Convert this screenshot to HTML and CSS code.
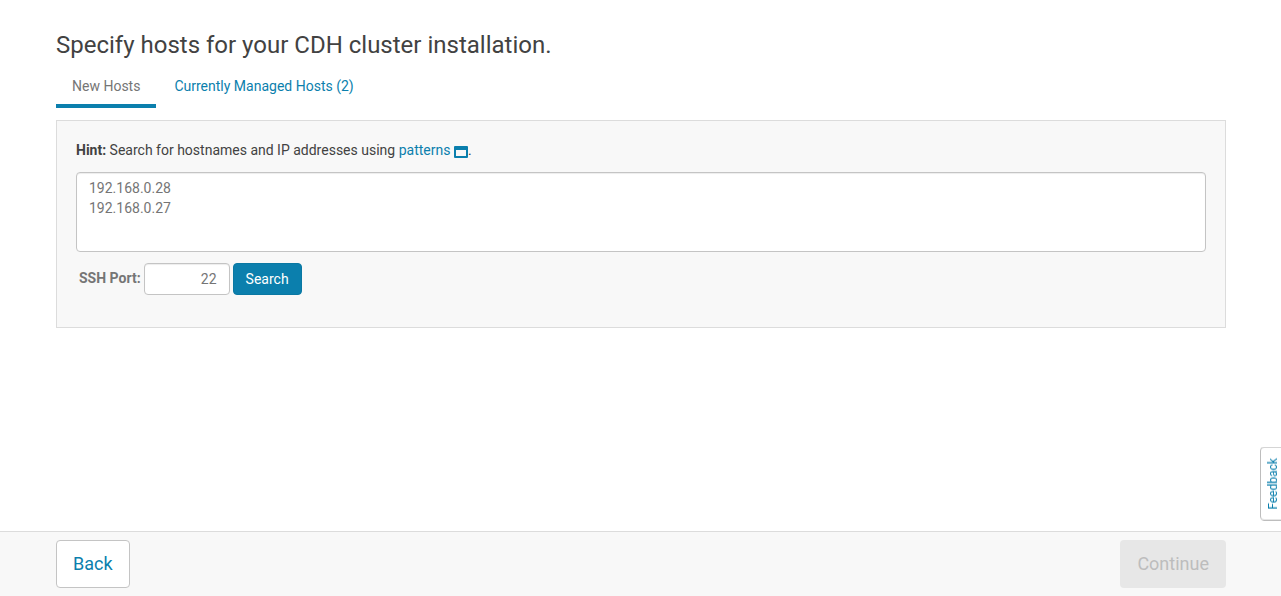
FILE: index.html
```
<!DOCTYPE html>
<html lang="en">
<head>
<meta charset="utf-8">
<title>Specify hosts</title>
<link rel="stylesheet" href="styles.css">
</head>
<body>
<main class="content">
  <h1 class="title">Specify hosts for your CDH cluster installation.</h1>
  <nav class="tabs">
    <a class="tab tab-active" href="#new">New Hosts</a>
    <a class="tab" href="#managed">Currently Managed Hosts (2)</a>
  </nav>
  <form class="panel">
    <label class="hint" for="hosts"><strong>Hint:</strong> Search for hostnames and IP addresses using <a href="#patterns">patterns <svg class="window-icon" viewBox="0 0 14 12" aria-hidden="true"><path fill="currentColor" fill-rule="evenodd" d="M1 0h12a1 1 0 0 1 1 1v10a1 1 0 0 1-1 1H1a1 1 0 0 1-1-1V1a1 1 0 0 1 1-1zM2 4v6h10V4z"/></svg></a>.</label>
    <textarea class="field hosts" id="hosts">192.168.0.28
192.168.0.27</textarea>
    <div class="port-row">
      <label class="port-label" for="port">SSH Port:</label>
      <input class="field port" id="port" type="text" value="22">
      <button class="button search" type="button">Search</button>
    </div>
  </form>
</main>
<button class="feedback" type="button">Feedback</button>
<footer class="footer">
  <button class="button back" type="button">Back</button>
  <button class="button continue" type="button" disabled>Continue</button>
</footer>
</body>
</html>
```
FILE: styles.css
```
* { box-sizing: border-box; }
body {
  margin: 0;
  min-height: 100vh;
  display: flex;
  flex-direction: column;
  background: #fff;
  color: #424242;
  font: 14px/20px Roboto, "Liberation Sans", sans-serif;
}
a { color: #0b7fad; text-decoration: none; }
.content { flex: 1; padding: 28px 55px 16px 56px; }
.title { margin: 0; font-size: 24px; line-height: 34px; font-weight: 400; }
.tabs { display: flex; gap: 2px; margin-bottom: 12px; }
.tab { padding: 14px 16px 8px; border-bottom: 4px solid transparent; }
.tab-active { color: #757575; border-bottom-color: #0b7fad; }
.panel {
  display: flex;
  flex-direction: column;
  padding: 19px 19px 32px;
  border: 1px solid #dcdcdc;
  background: #f8f8f8;
}
.hint { margin-bottom: 12px; }
.window-icon { width: 14px; height: 12px; vertical-align: -3px; }
.field {
  border: 1px solid #c4c4c4;
  border-radius: 4px;
  background: #fff;
  color: #757575;
  font: inherit;
  box-shadow: inset 0 1px 1px rgba(0, 0, 0, 0.075);
}
.hosts { display: block; width: 100%; height: 80px; padding: 5px 12px; resize: none; }
.port-row { display: flex; align-items: center; gap: 3px; margin-top: 11px; padding-left: 3px; }
.port-label { color: #757575; font-weight: 700; padding-bottom: 2px; }
.port { width: 86px; height: 32px; padding: 5px 12px; text-align: right; }
.button { border: 1px solid transparent; border-radius: 4px; font: inherit; }
.search { height: 32px; padding: 5px 12px; background: #0b7fad; border-color: #0a78a3; color: #fff; }
.footer {
  display: flex;
  justify-content: space-between;
  padding: 8px 55px 8px 56px;
  border-top: 1px solid #dcdcdc;
  background: #f8f8f8;
}
.back, .continue { height: 48px; padding: 0 16px; font-size: 18px; line-height: 24px; }
.back { background: #fff; border-color: #c4c4c4; color: #0b7fad; }
.continue { background: #e7e7e7; color: #bdbdbd; }
.feedback {
  position: fixed;
  right: -3px;
  bottom: 75px;
  padding: 10px 4px 10px 2px;
  border: 1px solid #bdbdbd;
  border-radius: 0 4px 4px 0;
  background: #fff;
  color: #0b7fad;
  font: 12px/16px Roboto, "Liberation Sans", sans-serif;
  writing-mode: vertical-rl;
  transform: rotate(180deg);
}
```
